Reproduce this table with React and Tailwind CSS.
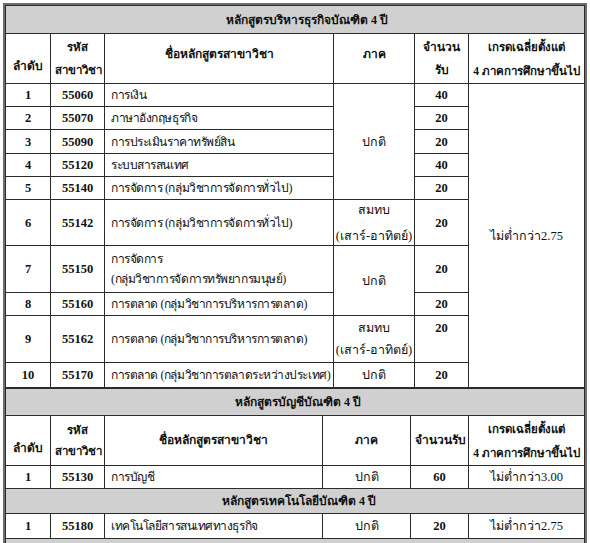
const ROWS = [
  { n: "1", code: "55060", name: ["การเงิน"], qty: "40", h: "h-[23px]" },
  { n: "2", code: "55070", name: ["ภาษาอังกฤษธุรกิจ"], qty: "20", h: "h-[23px]" },
  { n: "3", code: "55090", name: ["การประเมินราคาทรัพย์สิน"], qty: "20", h: "h-[24px]" },
  { n: "4", code: "55120", name: ["ระบบสารสนเทศ"], qty: "40", h: "h-[23px]" },
  { n: "5", code: "55140", name: ["การจัดการ (กลุ่มวิชาการจัดการทั่วไป)"], qty: "20", h: "h-[23px]" },
  { n: "6", code: "55142", name: ["การจัดการ (กลุ่มวิชาการจัดการทั่วไป)"], qty: "20", h: "h-[46px]" },
  { n: "7", code: "55150", name: ["การจัดการ", "(กลุ่มวิชาการจัดการทรัพยากรมนุษย์)"], qty: "20", h: "h-[47px]" },
  { n: "8", code: "55160", name: ["การตลาด (กลุ่มวิชาการบริหารการตลาด)"], qty: "20", h: "h-[23px]" },
  { n: "9", code: "55162", name: ["การตลาด (กลุ่มวิชาการบริหารการตลาด)"], qty: "20", h: "h-[47px]", top: true },
  { n: "10", code: "55170", name: ["การตลาด (กลุ่มวิชาการตลาดระหว่างประเทศ)"], qty: "20", h: "h-[25px]" },
];

const cell = "border border-[#2b2b2b] px-1 py-0 leading-[20px] whitespace-nowrap overflow-hidden";
const num = `${cell} text-center font-semibold`;
const nameCell = `${cell} pl-[6px] pr-0 text-[12px] tracking-[-0.45px]`;

function SectionTitle({ children, h, pad }) {
  return (
    <tr className={h}>
      <td colSpan={6} className={`border border-[#2b2b2b] bg-[#d0d0d0] py-0 leading-[20px] font-semibold text-[12px] ${pad}`}>
        {children}
      </td>
    </tr>
  );
}

function Weekend({ gap }) {
  return (
    <div className={`flex flex-col items-center leading-[18px] ${gap}`}>
      <span>สมทบ</span>
      <span>(เสาร์-อาทิตย์)</span>
    </div>
  );
}

function HeadRow({ h, second }) {
  const mid = second ? "" : "align-top pt-[9px]";
  return (
    <tr className={`${h} font-semibold text-[12px]`}>
      <td className={`${cell} text-center align-bottom pb-[5px] leading-[23px]`}>ลำดับ</td>
      <td className={`${cell} text-center text-[11.5px] px-0 ${second ? "leading-[21px]" : "leading-[23px]"}`}>
        รหัส<br />สาขาวิชา
      </td>
      <td className={`${cell} text-center leading-[23px] ${mid}`}>ชื่อหลักสูตรสาขาวิชา</td>
      <td className={`${cell} text-center leading-[23px] ${mid}`}>ภาค</td>
      <td className={`${cell} text-center leading-[23px]`}>
        {second ? "จำนวนรับ" : <>จำนวน<br />รับ</>}
      </td>
      <td className={`${cell} text-center text-[11.5px] px-0 leading-[24px]`}>
        เกรดเฉลี่ยตั้งแต่<br />4 ภาคการศึกษาขึ้นไป
      </td>
    </tr>
  );
}

export default function App() {
  return (
    <div
      className="h-[543px] w-[590px] overflow-hidden bg-white pl-[3px] pt-[3px] text-[#111] text-[12.5px] font-medium"
      style={{ fontFamily: '"Liberation Serif", serif' }}
    >
      <div className="w-[584px] border-2 border-[#6e6e6e]">
        <table className="w-full table-fixed border-collapse">
          <colgroup>
            <col className="w-[45px]" />
            <col className="w-[54px]" />
            <col className="w-[229px]" />
            <col className="w-[81px]" />
            <col className="w-[54px]" />
            <col />
          </colgroup>
          <tbody>
            <SectionTitle h="h-[28px]" pad="pl-[220px]">หลักสูตรบริหารธุรกิจบัณฑิต 4 ปี</SectionTitle>
            <HeadRow h="h-[50px]" />
            {ROWS.map((r, i) => (
              <tr key={r.code} className={r.h}>
                <td className={num}>{r.n}</td>
                <td className={num}>{r.code}</td>
                <td className={nameCell}>
                  {r.name.map((l, j) => (
                    <div key={j}>{l}</div>
                  ))}
                </td>
                {i === 0 && (
                  <td rowSpan={5} className={`${cell} text-center`}>ปกติ</td>
                )}
                {i === 5 && (
                  <td className={`${cell} text-center`}>
                    <Weekend gap="gap-[8px]" />
                  </td>
                )}
                {i === 8 && (
                  <td className={`${cell} text-center align-top pt-[3px]`}>
                    <Weekend gap="gap-[4px]" />
                  </td>
                )}
                {i === 6 && (
                  <td rowSpan={2} className={`${cell} text-center`}>ปกติ</td>
                )}
                {i === 9 && <td className={`${cell} text-center`}>ปกติ</td>}
                <td className={`${num} ${r.top ? "align-top pt-[2px]" : ""}`}>{r.qty}</td>
                {i === 0 && (
                  <td rowSpan={10} className={`${cell} text-center`}>ไม่ต่ำกว่า2.75</td>
                )}
              </tr>
            ))}
          </tbody>
        </table>

        <table className="w-full table-fixed border-collapse">
          <colgroup>
            <col className="w-[45px]" />
            <col className="w-[54px]" />
            <col className="w-[218px]" />
            <col className="w-[88px]" />
            <col className="w-[58px]" />
            <col />
          </colgroup>
          <tbody>
            <SectionTitle h="h-[27px]" pad="pl-[229px]">หลักสูตรบัญชีบัณฑิต 4 ปี</SectionTitle>
            <HeadRow h="h-[50px]" second />
            <tr className="h-[23px]">
              <td className={num}>1</td>
              <td className={num}>55130</td>
              <td className={nameCell}>การบัญชี</td>
              <td className={`${cell} text-center`}>ปกติ</td>
              <td className={num}>60</td>
              <td className={`${cell} text-center`}>ไม่ต่ำกว่า3.00</td>
            </tr>
            <SectionTitle h="h-[25px]" pad="pl-[216px]">หลักสูตรเทคโนโลยีบัณฑิต 4 ปี</SectionTitle>
            <tr className="h-[25px]">
              <td className={num}>1</td>
              <td className={num}>55180</td>
              <td className={nameCell}>เทคโนโลยีสารสนเทศทางธุรกิจ</td>
              <td className={`${cell} text-center`}>ปกติ</td>
              <td className={num}>20</td>
              <td className={`${cell} text-center`}>ไม่ต่ำกว่า2.75</td>
            </tr>
            <tr className="h-[20px]">
              <td colSpan={6} className="border border-[#2b2b2b] bg-[#d0d0d0]" />
            </tr>
          </tbody>
        </table>
      </div>
    </div>
  );
}
